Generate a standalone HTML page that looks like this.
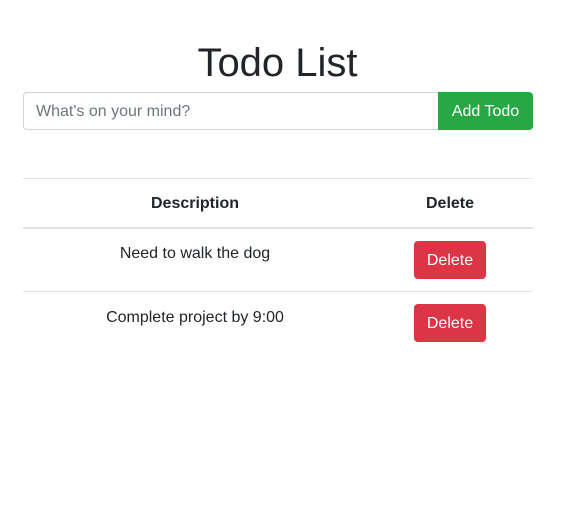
<!DOCTYPE html>
<html><head><style>
*{box-sizing:border-box}
body{margin:0;background:#fff;font-family:"Liberation Sans",sans-serif;color:#212529;font-size:16px;width:561px;height:514px;overflow:hidden}
h1{position:absolute;left:0;width:555px;top:39px;margin:0;text-align:center;font-size:40px;font-weight:500;line-height:48px}
.inp{position:absolute;left:23px;top:92px;width:416px;height:38px;border:1px solid #ced4da;border-radius:4px 0 0 4px;padding:0 12px;line-height:38px;color:#6c757d}
.add{position:absolute;left:438px;top:92px;width:95px;height:38px;background:#28a745;color:#fff;border-radius:0 4px 4px 0;text-align:center;line-height:40px}
.line{position:absolute;left:23px;width:510px;background:#dee2e6;height:1px}
.t{position:absolute;text-align:center;line-height:20px}
.del{position:absolute;left:414px;width:72px;height:38px;background:#dc3545;color:#fff;border-radius:4px;text-align:center;line-height:40px}
</style></head><body>
<h1>Todo List</h1>
<div class="inp">What's on your mind?</div>
<div class="add">Add Todo</div>
<div class="line" style="top:178px"></div>
<div class="t" style="left:23px;width:344px;top:194px;font-weight:bold">Description</div>
<div class="t" style="left:367px;width:166px;top:194px;font-weight:bold">Delete</div>
<div class="line" style="top:227px;height:2px"></div>
<div class="t" style="left:23px;width:344px;top:244px">Need to walk the dog</div>
<div class="del" style="top:241px">Delete</div>
<div class="line" style="top:291px"></div>
<div class="t" style="left:23px;width:344px;top:308px">Complete project by 9:00</div>
<div class="del" style="top:304px">Delete</div>
</body></html>
